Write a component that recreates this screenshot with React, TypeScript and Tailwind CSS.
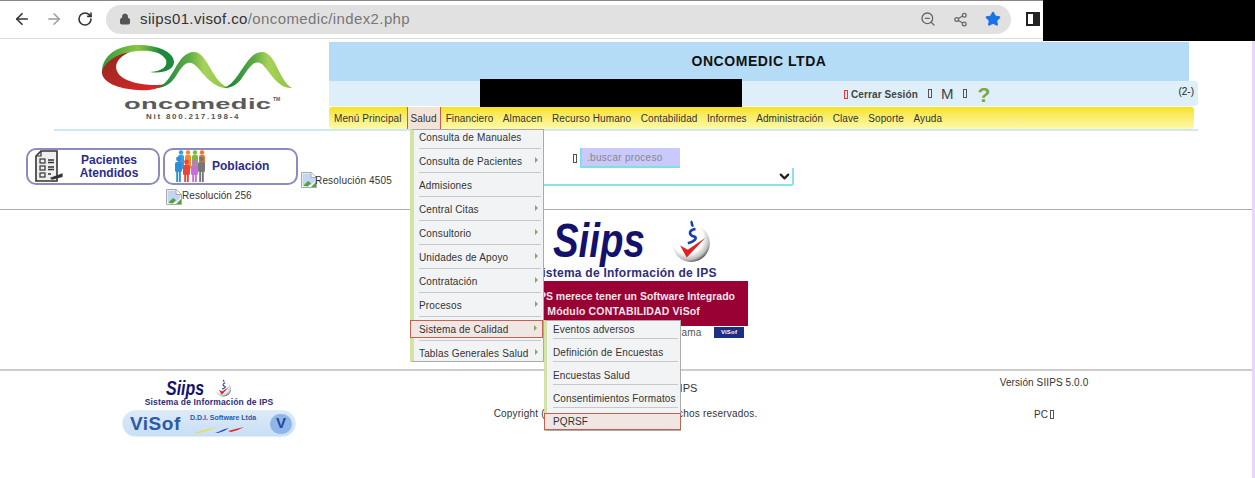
import React from 'react';
import { ArrowLeft, ArrowRight, RotateCw, Lock, ZoomOut, Share2, Star, ChevronDown } from 'lucide-react';

const MENU_TOP = ['Financiero', 'Almacen', 'Recurso Humano', 'Contabilidad', 'Informes', 'Administración', 'Clave', 'Soporte', 'Ayuda'];

const SALUD_ITEMS = [
    { label: 'Consulta de Manuales', arrow: false },
    { label: 'Consulta de Pacientes', arrow: true },
    { label: 'Admisiones', arrow: false },
    { label: 'Central Citas', arrow: true },
    { label: 'Consultorio', arrow: true },
    { label: 'Unidades de Apoyo', arrow: true },
    { label: 'Contratación', arrow: true },
    { label: 'Procesos', arrow: true },
    { label: 'Sistema de Calidad', arrow: true, active: true },
    { label: 'Tablas Generales Salud', arrow: true },
];

const CALIDAD_ITEMS = ['Eventos adversos', 'Definición de Encuestas', 'Encuestas Salud', 'Consentimientos Formatos'];

const Tofu = ({ red }: { red?: boolean }) => (
    <span className={`inline-block w-[4px] h-[9px] border ${red ? 'border-red-500' : 'border-[#555]'}`} />
);

const BrokenImage = () => (
    <svg width="16" height="16" viewBox="0 0 16 16" className="shrink-0">
        <path d="M.5.5h10l5 5v10H.5z" fill="#fff" stroke="#a9a9a9" />
        <path d="M1.5 1.5h8.5v4.5h4.5v3L10 13H1.5z" fill="#c3d5f3" />
        <path d="M2 14l5-5 3 2-3 3.5z" fill="#4fa53c" />
        <path d="M10 15l5-5v5z" fill="#4fa53c" />
        <path d="M10 .5v5h5" fill="#fff" stroke="#a9a9a9" />
    </svg>
);

const OncomedicLogo = () => (
    <div className="flex flex-col items-start pl-[100px] pt-[5px]">
        <svg width="194" height="48" viewBox="0 0 194 48">
            <defs>
                <linearGradient id="g1" x1="0" x2="1" y1="0" y2="0">
                    <stop offset="0" stopColor="#2f9a3f" />
                    <stop offset="0.5" stopColor="#8cc63f" />
                    <stop offset="0.8" stopColor="#1c8a3c" />
                    <stop offset="1" stopColor="#1c8a3c" />
                </linearGradient>
                <linearGradient id="g2" x1="0" x2="1" y1="0" y2="0">
                    <stop offset="0" stopColor="#0f7d3e" />
                    <stop offset="0.45" stopColor="#5fae43" />
                    <stop offset="0.65" stopColor="#a8d25a" />
                    <stop offset="1" stopColor="#8cc63f" />
                </linearGradient>
                <linearGradient id="g3" x1="0" x2="1" y1="0" y2="1">
                    <stop offset="0" stopColor="#8e2a1e" />
                    <stop offset="1" stopColor="#e0262a" />
                </linearGradient>
            </defs>
            <path d="M2 26C6 14 18 9 30 8 18 13 13 21 18 29c6 10 32 14 48 11-9 6-20 7-28 6C18 45 0 38 2 26z" fill="url(#g3)" />
            <path d="M2 26C4 8 22 1 38 1c20 0 36 7 36 17 0 8-12 12-24 10 12-1 18-5 16-12C62 8 50 6 38 7 20 8 8 15 2 26z" fill="url(#g1)" />
            <path d="M56 44c18-4 20-36 38-36 14 0 18 32 36 36-16 2-26-14-34-22-8-8-14 0-20 10-4 6-10 12-20 12z" fill="url(#g2)" />
            <path d="M124 44c16-6 22-36 38-36 14 0 16 28 30 36-14 1-22-16-30-24-8-6-14 6-20 14-4 6-10 10-18 10z" fill="url(#g2)" />
        </svg>
        <div className="flex items-start ml-[24px] mt-[4px] h-[15px] text-[#5a5a5a] leading-none">
            <span className="w-[147px]">
                <span className="inline-block origin-left scale-x-[1.82] text-[15px] font-bold tracking-[0.2px]">oncomedic</span>
            </span>
            <span className="text-[5px] font-bold ml-[2px] mt-[1px]">TM</span>
        </div>
        <span className="ml-[46px] mt-[2px] text-[8px] font-bold text-[#555] tracking-[1.75px] leading-none whitespace-nowrap">Nit 800.217.198-4</span>
    </div>
);

const ChecklistIcon = () => (
    <svg width="30" height="33" viewBox="0 0 30 33" fill="none" stroke="#333" strokeWidth="1.2">
        <path d="M8 1h16v30H3V6z" fill="#eee" strokeWidth="1.6" />
        <path d="M3 6h5V1" />
        <rect x="7" y="9" width="5" height="4" />
        <rect x="7" y="16" width="5" height="4" />
        <rect x="7" y="23" width="5" height="4" />
        <path d="M15 10h6M15 12.5h6M15 17h6M15 19.5h6M15 24h3" strokeWidth="1.4" />
        <path d="M18 28l11-4v2.5L19 29z" fill="#333" />
    </svg>
);

const People = () => {
    const back = [['#3f9be0', 3], ['#f28a2e', 10], ['#7cbc3a', 17], ['#f0762e', 24]] as const;
    const front = [['#2e8fd8', 0, 12], ['#e8463a', 8, 15], ['#c76fd8', 16, 15], ['#777', 23, 12]] as const;
    return (
        <svg width="31" height="33" viewBox="0 0 31 33">
            {back.map(([c, x]) => (
                <g key={c} fill={c}>
                    <circle cx={x + 3} cy="2.5" r="2.2" />
                    <rect x={x} y="5" width="6" height="14" rx="1.5" />
                </g>
            ))}
            {front.map(([c, x, y]) => (
                <g key={c} fill={c}>
                    <circle cx={x + 3.5} cy={y - 3} r="2.4" />
                    <rect x={x} y={y} width="7" height="10" rx="1.5" />
                    <rect x={x + 1.2} y={y + 9} width="1.9" height={23 - y} />
                    <rect x={x + 3.9} y={y + 9} width="1.9" height={23 - y} />
                </g>
            ))}
        </svg>
    );
};

const CheckDisc = ({ size }: { size: number }) => (
    <svg width={size} height={size} viewBox="0 0 40 40">
        <defs>
            <radialGradient id="disc" cx="0.4" cy="0.35" r="0.7">
                <stop offset="0.6" stopColor="#fff" />
                <stop offset="0.85" stopColor="#bbb" />
                <stop offset="1" stopColor="#333" />
            </radialGradient>
        </defs>
        <circle cx="21" cy="22" r="17" fill="url(#disc)" />
        <path d="M11 24l6 11 17-18-16 11z" fill="#e02020" />
        <path d="M22 2c-2 2 1 3 0 5M25 9c-8 2-5 6-1 7 3 1 0 5-6 6" fill="none" stroke="#1a3fb0" strokeWidth="2.4" />
    </svg>
);

const SiipsWord = ({ size }: { size: 'lg' | 'sm' }) => (
    <span className={size === 'lg' ? 'w-[92px] text-[48px]' : 'w-[38px] text-[20px]'}>
        <span className="inline-block origin-left scale-x-[0.8] italic font-bold text-[#12126e] leading-none">Siips</span>
    </span>
);

export default function App() {
    return (
        <div className="relative flex w-[1255px] h-[478px] overflow-hidden bg-white font-['Liberation_Sans',sans-serif] text-[#222]">
            <div className="w-[1252px]">
                {/* browser bar */}
                <div className="flex items-center h-[39px] border-t border-t-[#888] border-b border-b-[#ddd] pl-[13px] pb-[1px]">
                    <ArrowLeft size={18} strokeWidth={2.2} className="text-[#333]" />
                    <ArrowRight size={18} strokeWidth={1.8} className="text-[#999] ml-[14px]" />
                    <RotateCw size={16} strokeWidth={2.4} className="text-[#333] ml-[14px]" />
                    <div className="flex items-center w-[905px] h-[29px] rounded-full bg-[#e1e1e1] ml-[13px] pl-[13px] pr-[10px]">
                        <Lock size={12} fill="#555" className="text-[#555]" />
                        <span className="text-[15px] tracking-[0.38px] ml-[9px] text-[#333]">siips01.visof.co<span className="text-[#777]">/oncomedic/index2.php</span></span>
                        <ZoomOut size={16} className="text-[#666] ml-auto" />
                        <Share2 size={15} className="text-[#666] ml-[17px]" />
                        <Star size={16} fill="#1a73e8" className="text-[#1a73e8] ml-[17px]" />
                    </div>
                    <div className="w-[14px] h-[14px] border-2 border-[#222] ml-[15px] flex justify-end">
                        <div className="w-[5px] bg-[#222]" />
                    </div>
                </div>

                {/* header */}
                <div className="flex">
                    <div className="w-[329px]">
                        <OncomedicLogo />
                    </div>
                    <div className="w-[869px] pt-[3px]">
                        <div className="flex items-center justify-center h-[39px] w-[860px] bg-[#b5dcf7] text-[14px] font-bold text-[#111] tracking-[0.55px]">
                            ONCOMEDIC LTDA
                        </div>
                        <div className="flex items-center h-[25px] pt-[1px] bg-[#deeffa] rounded-r-[4px] pl-[515px] text-[10px] font-bold text-[#444] tracking-[0.1px]">
                            <Tofu red />
                            <span className="ml-[3px]">Cerrar Sesión</span>
                            <span className="ml-[10px]"><Tofu /></span>
                            <span className="ml-[9px] text-[15px] font-normal">M</span>
                            <span className="ml-[9px]"><Tofu /></span>
                            <span className="ml-[11px] text-[21px] font-bold text-[#7aa83c] leading-none">?</span>
                            <span className="ml-auto mr-[4px] mb-[6px] font-normal text-[#222] tracking-normal">(2-)</span>
                        </div>
                        <div className="flex items-center h-[22px] w-[865px] mt-[1px] rounded-[3px] bg-gradient-to-b from-[#f7e20c] to-[#fdfaa8] text-[10px] text-[#333] tracking-[0.1px]">
                            <span className="pl-[5px] pr-[5px]">Menú Principal</span>
                            <span className="h-full flex items-center px-[3px] mr-[5px] bg-[#f3e2d6] border-x border-[#d05a48]">Salud</span>
                            <div className="flex gap-[9.5px]">
                                {MENU_TOP.map(m => <span key={m}>{m}</span>)}
                            </div>
                        </div>
                    </div>
                </div>
                <div className="h-[2px] ml-[54px] w-[1144px] bg-[#cfe8f8]" />

                {/* accesos y busqueda */}
                <div className="relative h-[79px] border-b border-[#aaa]">
                    <div className="flex gap-[3px] pl-[26px] pt-[17px]">
                        <div className="flex items-center w-[134px] h-[37px] rounded-[10px] border-2 border-[#8b8bc0] pl-[5px]">
                            <ChecklistIcon />
                            <span className="w-[68px] ml-[12px] text-center text-[12px] leading-[13px] font-bold text-[#2b2b8c]">Pacientes Atendidos</span>
                        </div>
                        <div className="flex items-center w-[135px] h-[37px] rounded-[10px] border-2 border-[#8b8bc0] pl-[10px]">
                            <People />
                            <span className="ml-[6px] mb-[2px] text-[12px] font-bold text-[#2b2b8c]">Población</span>
                        </div>
                        <div className="flex items-center self-end mb-[-3px] text-[10px] tracking-[0.17px] text-[#333]">
                            <BrokenImage />
                            <span className="whitespace-nowrap -ml-[2px]">Resolución 4505</span>
                        </div>
                    </div>
                    <div className="flex items-center pl-[166px] mt-[3px] text-[10px] tracking-[0.05px] text-[#333]">
                        <BrokenImage />
                        <span className="mb-[3px]">Resolución 256</span>
                    </div>
                    <div className="absolute left-[573px] top-[17px] flex items-center gap-[3px]">
                        <Tofu />
                        <div className="flex items-center w-[100px] h-[20px] pl-[5px] bg-[#c9c9fb] border-l-2 border-b-2 border-[#7fe0e0] text-[10px] tracking-[0.3px] text-[#888]">.buscar proceso</div>
                    </div>
                    <div className="absolute left-[530px] top-[37px] flex items-center justify-end w-[264px] h-[18px] border-r-2 border-b-2 border-[#8ae6e6] rounded-br-[3px]">
                        <ChevronDown size={15} strokeWidth={3.5} className="text-[#222]" />
                    </div>
                </div>

                {/* contenido central */}
                <div className="flex flex-col h-[161px] border-b-2 border-[#ccc]">
                    <div className="flex items-center mt-[4px] ml-[553px] h-[54px]">
                        <SiipsWord size="lg" />
                        <span className="ml-[23px]"><CheckDisc size={44} /></span>
                    </div>
                    <span className="self-start ml-[534px] mt-[-4px] text-[12px] font-bold text-[#2d2d80] tracking-[0.25px] whitespace-nowrap">Sistema de Información de IPS</span>
                    <div className="flex flex-col items-end justify-center self-start ml-[538px] mt-[-1px] w-[210px] h-[45px] bg-[#990033] text-[#f3e6e9] text-[10.5px] font-bold leading-[15px]">
                        <span className="pr-[13px] whitespace-nowrap">SIIPS merece tener un Software Integrado</span>
                        <span className="pr-[48px] tracking-[0.15px] whitespace-nowrap">Módulo CONTABILIDAD ViSof</span>
                    </div>
                    <div className="flex items-center self-start ml-[656px] mt-[-1px] text-[10px] tracking-[0.2px] text-[#555]">
                        <span className="w-[45px]">Programa</span>
                        <div className="flex items-center justify-center ml-[13px] w-[30px] h-[11px] bg-[#1c2f86] text-white text-[6px] font-bold">ViSof</div>
                    </div>
                </div>

                {/* pie */}
                <div className="relative h-[107px]">
                    <div className="absolute left-[122px] top-[6px] flex flex-col items-center w-[174px]">
                        <div className="flex items-center h-[22px] mr-[21px]">
                            <SiipsWord size="sm" />
                            <span className="ml-[10px]"><CheckDisc size={18} /></span>
                        </div>
                        <span className="text-[8.5px] font-bold text-[#2d2d80] leading-none mt-[-1px] tracking-[0.15px] whitespace-nowrap">Sistema de Información de IPS</span>
                        <div className="relative flex items-center w-[174px] h-[27px] mt-[3px] rounded-full bg-gradient-to-b from-[#dceaf8] to-[#c8dff5] border border-[#e0ecf8]">
                            <span className="ml-[7px] text-[19px] font-bold text-[#2d5aa8] tracking-[0.5px] leading-none">ViSof</span>
                            <span className="absolute left-[67px] top-[3px] text-[7px] font-bold text-[#2d5aa8] leading-none whitespace-nowrap">D.D.I. Software Ltda</span>
                            <svg width="52" height="10" viewBox="0 0 52 10" className="absolute left-[70px] top-[13px]">
                                <path d="M0 9c8-1 16-5 24-6-6 2-12 5-19 6z" fill="#f2dc2a" />
                                <path d="M22 9c4-1 8-4 14-5-3 2-7 4-11 5z" fill="#2a45c0" />
                                <path d="M35 7c5-1 10-3 16-4-4 2-8 4-13 5z" fill="#e02a2a" />
                            </svg>
                            <div className="absolute right-[3px] top-[3px] flex items-center justify-center w-[22px] h-[20px] rounded-full bg-[#8fb6e6] text-[15px] font-bold text-[#24459c]">V</div>
                        </div>
                    </div>
                    <div className="flex flex-col items-center ml-[250px] w-[751px] text-[10px] tracking-[0.2px] text-[#333]">
                        <span className="mt-[9px] pr-[8px] text-[11px] tracking-normal">Sistema de Información de IPS</span>
                        <span className="mt-[9px]">Copyright (c) ViSof Ltda. Todos los derechos reservados.</span>
                    </div>
                    <div className="absolute left-[999px] top-[4px] w-[90px] flex flex-col items-center text-[10px] tracking-[0.1px] text-[#333]">
                        <span className="whitespace-nowrap">Versión SIIPS 5.0.0</span>
                        <span className="mt-[17px] flex items-center gap-[2px]">PC <Tofu /></span>
                    </div>
                </div>
            </div>
            <div className="w-[3px] bg-[#ead5fb]" />

            {/* menu desplegado */}
            <div className="absolute left-[410px] top-[129px] w-[134px] h-[233px] bg-[#f1f3f5] border border-[#aaa] border-l-[4px] border-l-[#d3e2a6] text-[10px] tracking-[0.15px] text-[#333]">
                {SALUD_ITEMS.map((it, i) => (
                    <div key={it.label} className={`relative h-[24px] ${it.active ? '-ml-[4px]' : ''}`}>
                        <div className={`flex items-center justify-between pr-[5px] ${it.active ? 'relative -top-[2px] h-[18px] pl-[8px] bg-[#f0e6e3] border border-[#c8604e]' : 'h-[15px] pl-[5px]'}`}>
                            <span>{it.label}</span>
                            {it.arrow && <span className="w-0 h-0 border-y-[3px] border-y-transparent border-l-[3px] border-l-[#8da860] mb-[3px]" />}
                        </div>
                        {i < SALUD_ITEMS.length - 1 && <div className={`absolute right-[2px] bottom-[5px] h-[1px] bg-[#c8c8c8] ${it.active ? 'left-[9px]' : 'left-[5px]'}`} />}
                    </div>
                ))}
            </div>
            <div className="absolute left-[544px] top-[320px] w-[137px] h-[111px] bg-[#f1f3f5] border border-[#aaa] border-l-[3px] border-l-[#d3e2a6] text-[10px] tracking-[0.13px] text-[#333]">
                {CALIDAD_ITEMS.map(label => (
                    <div key={label} className="relative h-[23px] pl-[6px]">
                        <div className="flex items-center h-[16px] whitespace-nowrap">{label}</div>
                        <div className="absolute left-[6px] right-[2px] bottom-[5px] h-[1px] bg-[#c8c8c8]" />
                    </div>
                ))}
                <div className="absolute left-[-3px] right-[-1px] bottom-0 h-[17px] flex items-center pl-[8px] bg-[#f0e6e3] border border-[#c8604e]">PQRSF</div>
            </div>

            {/* franja oculta */}
            <div className="absolute right-0 top-0 w-[212px] h-[41px] bg-black" />
            <div className="absolute left-[480px] top-[79px] w-[262px] h-[28px] bg-black" />
        </div>
    );
}
